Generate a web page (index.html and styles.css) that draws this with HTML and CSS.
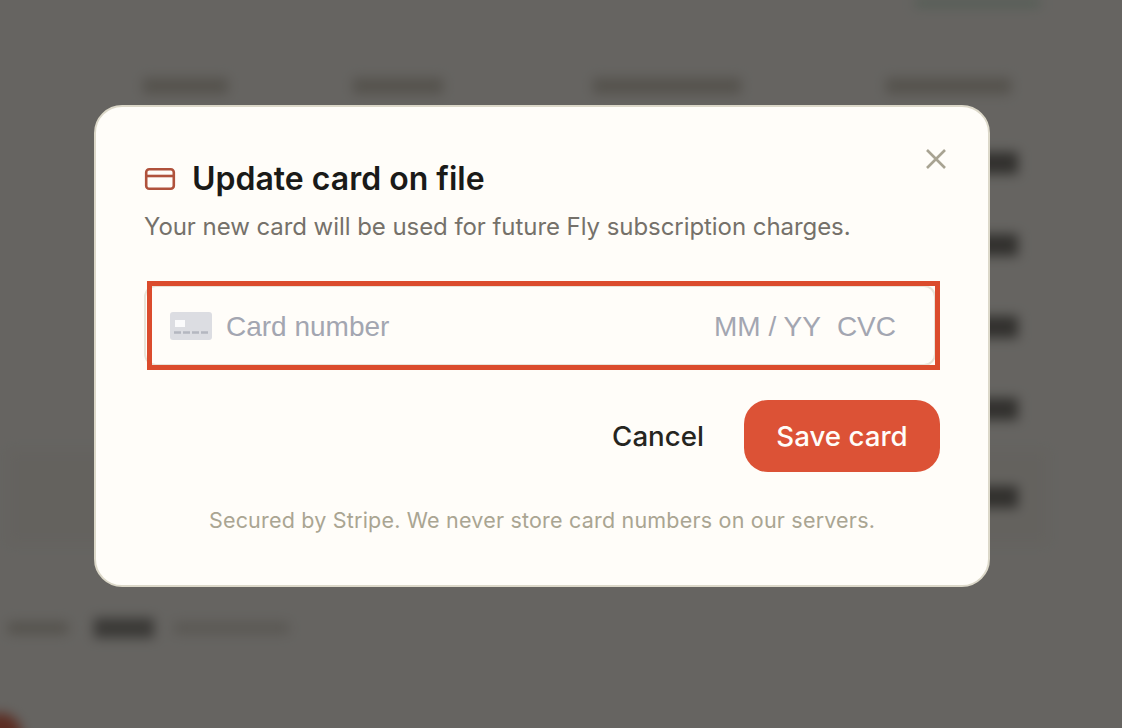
FILE: index.html
```html
<!DOCTYPE html>
<html lang="en">
<head>
    <meta charset="UTF-8">
    <meta name="viewport" content="width=device-width, initial-scale=1.0">
    <title>Update card on file</title>
    <link rel="stylesheet" href="styles.css">
</head>
<body>
    <div class="page" aria-hidden="true">
        <div class="top-row">
            <div class="top-pill"></div>
        </div>
        <div class="panel">
            <div class="panel-head">
                <div class="head-cell w-85"></div>
                <div class="head-cell w-90"></div>
                <div class="head-cell w-150"></div>
                <div class="head-cell w-125"></div>
            </div>
            <div class="panel-row"><div class="amount"></div></div>
            <div class="panel-row"><div class="amount"></div></div>
            <div class="panel-row"><div class="amount"></div></div>
            <div class="panel-row"><div class="amount"></div></div>
            <div class="panel-row total"><div class="amount"></div></div>
        </div>
        <div class="summary">
            <div class="summary-label"></div>
            <div class="summary-value"></div>
            <div class="summary-note"></div>
        </div>
        <div class="page-foot">
            <div class="foot-dot"></div>
        </div>
    </div>

    <div class="backdrop">
        <div class="modal">
            <button class="close-btn" aria-label="Close">
                <svg width="22" height="22" viewBox="0 0 22 22" fill="none" stroke="currentColor" stroke-width="2.6">
                    <path d="M2 2 L20 20 M20 2 L2 20"/>
                </svg>
            </button>

            <div class="modal-title">
                <svg class="title-icon" width="32" height="24" viewBox="0 0 32 24" fill="none" stroke="currentColor" stroke-width="2.6">
                    <rect x="2.2" y="2.2" width="27.6" height="19.6" rx="3"/>
                    <path d="M2 9 H30"/>
                </svg>
                <h2>Update card on file</h2>
            </div>
            <p class="modal-sub">Your new card will be used for future Fly subscription charges.</p>

            <div class="card-field">
                <svg class="card-glyph" width="42" height="28" viewBox="0 0 42 28">
                    <rect width="42" height="28" rx="3" fill="#dcdde2"/>
                    <rect x="5" y="8" width="10" height="7" fill="#fbfbfc"/>
                    <path d="M4 20.5 H38" stroke="#b4b7c0" stroke-width="2.4" stroke-dasharray="7 2"/>
                </svg>
                <span class="card-number">Card number</span>
                <span class="card-expiry">MM / YY</span>
                <span class="card-cvc">CVC</span>
                <div class="highlight"></div>
            </div>

            <div class="modal-actions">
                <button class="button cancel">Cancel</button>
                <button class="button save">Save card</button>
            </div>

            <p class="modal-foot">Secured by Stripe. We never store card numbers on our servers.</p>
        </div>
    </div>
</body>
</html>
```

FILE: styles.css
```css
html, body {
    margin: 0;
    height: 100%;
    overflow: hidden;
}

body {
    font-family: Inter, "Liberation Sans", sans-serif;
    background-color: #faf8f2;
}

/* page behind the modal, only visible as a blur */
.page {
    height: 728px;
    padding: 0 0 0 8px;
    box-sizing: border-box;
    filter: blur(6px);
}

.top-row {
    display: flex;
    justify-content: flex-end;
    padding-right: 82px;
    height: 50px;
}

.top-pill {
    width: 125px;
    height: 6px;
    background-color: #b0dcc2;
}

.panel {
    width: 1040px;
    border-radius: 24px;
}

.panel-head {
    display: flex;
    gap: 125px;
    height: 72px;
    align-items: center;
    padding-left: 135px;
}

.head-cell {
    height: 16px;
    background-color: #c8c3b6;
}

.w-85 { width: 85px; }
.w-90 { width: 90px; margin-right: 25px; }
.w-150 { width: 148px; margin-right: 20px; }
.w-125 { width: 125px; }

.panel-row {
    display: flex;
    justify-content: flex-end;
    align-items: center;
    height: 82px;
    padding-right: 30px;
}

.panel-row.total {
    height: 94px;
    background-color: #f5f2ea;
}

.amount {
    width: 90px;
    height: 22px;
    background-color: #5f5e59;
}

.summary {
    display: flex;
    align-items: center;
    gap: 20px;
    height: 100px;
    margin-top: 34px;
}

.summary-label {
    width: 60px;
    height: 12px;
    background-color: #c8c3b6;
}

.summary-value {
    width: 60px;
    height: 20px;
    margin-left: 6px;
    background-color: #7a7974;
}

.summary-note {
    width: 115px;
    height: 12px;
    background-color: #d8d4ca;
}

.page-foot {
    display: flex;
    align-items: flex-end;
    height: 50px;
}

.foot-dot {
    width: 44px;
    height: 44px;
    margin: 0 0 -29px -30px;
    border-radius: 50%;
    background-color: #dc5236;
}

/* overlay */
.backdrop {
    position: fixed;
    inset: 0;
    padding: 105px 0 0 94px;
    background-color: rgba(28, 27, 26, 0.67);
}

.modal {
    position: relative;
    width: 896px;
    height: 482px;
    box-sizing: border-box;
    padding: 51px 48px 0 48px;
    background-color: #fffdf9;
    border: 2px solid #dcd8c9;
    border-radius: 28px;
}

.close-btn {
    position: absolute;
    top: 41px;
    right: 41px;
    padding: 0;
    border: none;
    background: none;
    color: #a8a392;
    display: flex;
}

.modal-title {
    display: flex;
    align-items: center;
    gap: 16px;
    height: 40px;
}

.title-icon {
    margin-top: 2px;
    color: #b0523c;
}

.modal-title h2 {
    margin: 0;
    font-size: 32px;
    font-weight: 600;
    color: #1a1a18;
}

.modal-sub {
    margin: 13px 0 0 0;
    font-size: 24px;
    line-height: 32px;
    letter-spacing: -0.06px;
    color: #75716a;
}

.card-field {
    position: relative;
    display: flex;
    align-items: center;
    height: 81px;
    margin: 42px 0 0 0;
    padding: 2px 38px 0 24px;
    box-sizing: border-box;
    width: 792px;
    border: 2px solid #e8e4d9;
    border-radius: 12px;
    font-family: "Liberation Sans", Arial, sans-serif;
    font-size: 28px;
    color: #a3a6b1;
}

.card-glyph {
    margin: -2px 14px 0 0;
}

.card-number {
    flex: 1;
}

.card-cvc {
    margin-left: 16px;
}

/* red annotation box drawn over the field */
.highlight {
    position: absolute;
    top: -6px;
    left: 1px;
    right: -6px;
    bottom: -5.5px;
    border: 5.5px solid #db4c2d;
}

.modal-actions {
    display: flex;
    justify-content: flex-end;
    align-items: center;
    gap: 40px;
    margin-top: 34px;
}

.button {
    font-family: Inter, "Liberation Sans", sans-serif;
    font-size: 27.7px;
    font-weight: 450;
    border: none;
    background: none;
    padding: 0;
    cursor: pointer;
}

.button.cancel {
    color: #26251f;
}

.button.save {
    width: 196px;
    height: 72px;
    border-radius: 24px;
    background-color: #dc5236;
    color: #fffdf9;
}

.modal-foot {
    margin: 34px 0 0 0;
    font-size: 21.5px;
    line-height: 28px;
    letter-spacing: 0.2px;
    text-align: center;
    color: #aaa592;
}
```
